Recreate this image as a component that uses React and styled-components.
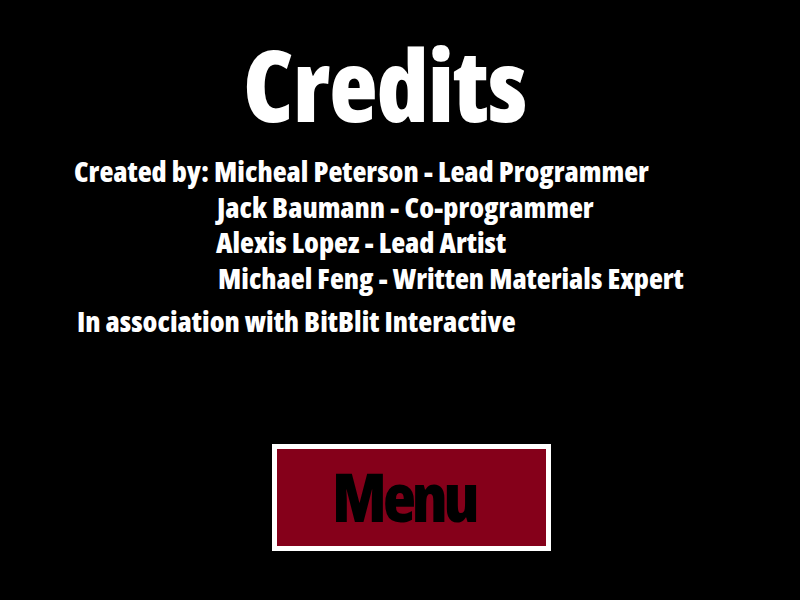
import React from "react";
import styled, { createGlobalStyle } from "styled-components";

const GlobalStyle = createGlobalStyle`
  html, body {
    margin: 0;
    padding: 0;
    background: #000;
  }
  body {
    font-family: "Open Sans", "Liberation Sans", sans-serif;
    font-stretch: condensed;
    font-weight: 800;
    color: #fff;
  }
`;

const Screen = styled.main`
  width: 800px;
  height: 600px;
  background: #000;
  display: flex;
  flex-direction: column;
  overflow: hidden;
`;

const Title = styled.h1`
  margin: 33px 0 0 243px;
  font-size: 100px;
  line-height: 100px;
  font-weight: 800;
  letter-spacing: -1px;
  color: #fff;
`;

const CreditList = styled.section`
  margin-top: 20px;
  display: flex;
  flex-direction: column;
`;

const Line = styled.div`
  padding-left: ${(p) => p.$indent}px;
  margin-top: ${(p) => p.$gap || 0}px;
  font-size: 28.8px;
  line-height: 35.5px;
  white-space: nowrap;
  color: #fff;
`;

const MenuButton = styled.button`
  margin: 105px 0 0 272px;
  width: 279px;
  height: 107px;
  box-sizing: border-box;
  border: 5px solid #fff;
  background: #85001a;
  display: flex;
  align-items: flex-start;
  padding: 13px 0 0 55px;
  font-family: inherit;
  font-stretch: condensed;
  font-weight: 800;
  font-size: 68px;
  line-height: 68px;
  letter-spacing: -4px;
  color: #000;
  cursor: pointer;
`;

const credits = [
  { indent: 74, text: "Created by: Micheal Peterson - Lead Programmer" },
  { indent: 217, text: "Jack Baumann - Co-programmer" },
  { indent: 216, text: "Alexis Lopez - Lead Artist" },
  { indent: 218, text: "Michael Feng - Written Materials Expert" },
  { indent: 77, gap: 8, text: "In association with BitBlit Interactive" },
];

export default function App() {
  return (
    <Screen>
      <GlobalStyle />
      <Title>Credits</Title>
      <CreditList>
        {credits.map((c) => (
          <Line key={c.text} $indent={c.indent} $gap={c.gap}>
            {c.text}
          </Line>
        ))}
      </CreditList>
      <MenuButton>Menu</MenuButton>
    </Screen>
  );
}
